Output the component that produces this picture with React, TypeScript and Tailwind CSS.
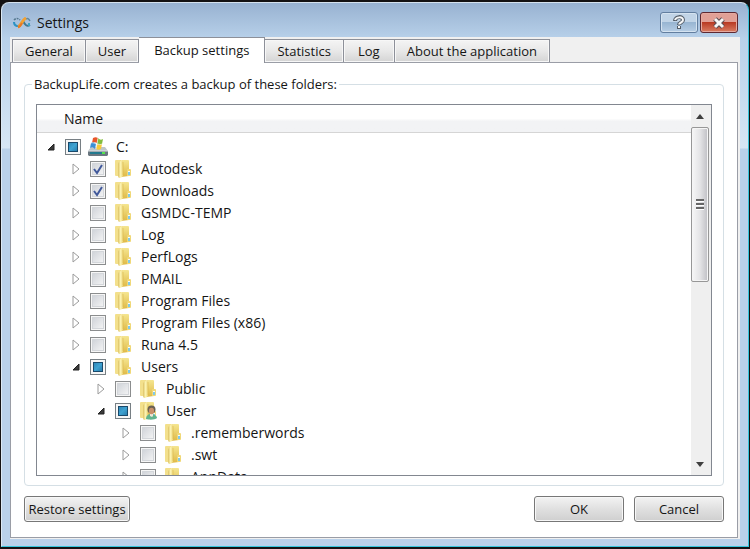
import { useState } from "react";

type CheckState = "on" | "off" | "mixed";

interface TreeNode {
  name: string;
  check: CheckState;
  icon?: "drive" | "user";
  open?: boolean;
  children?: TreeNode[];
}

const tree: TreeNode = {
  name: "C:",
  check: "mixed",
  icon: "drive",
  open: true,
  children: [
    { name: "Autodesk", check: "on" },
    { name: "Downloads", check: "on" },
    { name: "GSMDC-TEMP", check: "off" },
    { name: "Log", check: "off" },
    { name: "PerfLogs", check: "off" },
    { name: "PMAIL", check: "off" },
    { name: "Program Files", check: "off" },
    { name: "Program Files (x86)", check: "off" },
    { name: "Runa 4.5", check: "off" },
    {
      name: "Users",
      check: "mixed",
      open: true,
      children: [
        { name: "Public", check: "off" },
        {
          name: "User",
          check: "mixed",
          icon: "user",
          open: true,
          children: [
            { name: ".rememberwords", check: "off" },
            { name: ".swt", check: "off" },
            { name: "AppData", check: "off" },
          ],
        },
      ],
    },
  ],
};

const tabs = ["General", "User", "Backup settings", "Statistics", "Log", "About the application"];

function AppLogo() {
  return (
    <svg viewBox="0 0 18 12" className="h-3 w-[18px]" fill="none">
      <path d="M1 3C3 1 5 1 7 3" stroke="#56788f" strokeWidth="1.5" strokeDasharray="2 1" />
      <path d="M1 5c0 4 4 5 6 3" stroke="#2c93c4" strokeWidth="2" />
      <path d="M10 4c2 4 4 6 7 4" stroke="#41788f" strokeWidth="2" />
      <path d="M13 2c2-1 3 0 4 2" stroke="#63889c" strokeWidth="1.5" />
      <path d="M16 6v3" stroke="#3ba3c9" strokeWidth="2" />
      <path d="M5 10c3-1 4-7 8-9" stroke="#f2a234" strokeWidth="3" />
      <path d="M5 10c2 0 3-2 4-4" stroke="#e77a25" strokeWidth="2" />
    </svg>
  );
}

function FolderIcon({ user }: { user?: boolean }) {
  return (
    <svg viewBox="0 0 20 20" className="size-5">
      <defs>
        <linearGradient id="folderFront" x1="0" y1="0" x2="1" y2="0">
          <stop offset="0" stopColor="#dcc163" />
          <stop offset="0.5" stopColor="#fbf2b0" />
          <stop offset="1" stopColor="#efd97f" />
        </linearGradient>
        <linearGradient id="folderBack" x1="0" y1="0" x2="0" y2="1">
          <stop offset="0" stopColor="#f5e691" />
          <stop offset="1" stopColor="#dfb945" />
        </linearGradient>
      </defs>
      <path d="M9 2q0-1 1-1h5q1 0 1 1v8l1 1v5q0 1-1 1l-8 1z" fill="url(#folderBack)" />
      <path d="M2 2q0-1 1-1h5q1 0 1 1v15H3q-1 0-1-1z" fill="#f3e08c" />
      <path d="M5 5q0-1 1-2l4-2v15q0 1-1 2l-2 1q-2 0-2-2z" fill="url(#folderFront)" />
      <path d="M10 3v13" stroke="#d9b54a" strokeWidth="0.6" />
      <path d="M14 11q0-1 1-1h2q1 0 1 1v5q0 1-1 1h-3z" fill="#f0d878" />
      <path d="M16 12v4" stroke="#f8fbfc" strokeWidth="2" />
      <path d="M16 13v3" stroke="#4db5df" strokeWidth="1.4" />
      {user && (
        <g>
          <path d="M8 18c0-3 2-5 5-5s6 2 6 4c-2 2-8 2-11 1z" fill="#62b48e" />
          <path d="M12 12h3v3l-1 1-2-1z" fill="#f1e6d6" />
          <circle cx="13.5" cy="8.5" r="4" fill="#6b6253" />
          <ellipse cx="13.5" cy="10" rx="2.6" ry="3.2" fill="#c99069" />
        </g>
      )}
    </svg>
  );
}

function DriveIcon() {
  return (
    <svg viewBox="0 0 20 20" className="size-5">
      <path d="M3 10h14l3 4H0z" fill="#bfc5c9" />
      <path d="M0 14h20v4l-1 1H1l-1-1z" fill="#69767f" />
      <path d="M0 14h20" stroke="#dde2e5" />
      <path d="M2 15h13v2H2z" fill="#23798f" />
      <path d="M14 15h3v2h-3z" fill="#54e34d" />
      <path d="M5 1c2-1 3-1 5 0L9 6C7 5 6 5 4 6z" fill="#e8562a" />
      <path d="M10 1c2 2 3 2 5 1l-1 5c-2 1-3 1-5 0z" fill="#83bd3c" />
      <path d="M3 6c2-1 3-1 5 1l-1 5c-2-2-3-2-5-1z" fill="#3a8fd6" />
      <path d="M9 7c2 1 3 1 5 0l-1 5c-2 1-3 1-5 0z" fill="#f8ca39" />
      <path d="M10 1L8 12M3 6c2-1 4 1 6 1s3 1 5 0" stroke="#f5f5f5" strokeWidth="0.6" fill="none" />
    </svg>
  );
}

function TriCheckbox({ initial, label }: { initial: CheckState; label: string }) {
  const [state, setState] = useState<CheckState>(initial);

  return (
    <span className="grid size-4 shrink-0">
      <input
        type="checkbox"
        aria-label={label}
        checked={state === "on"}
        ref={(el) => {
          if (el) el.indeterminate = state === "mixed";
        }}
        onChange={() => setState(state === "on" ? "off" : "on")}
        className="col-start-1 row-start-1 size-4 appearance-none border border-[#8b8d8e] bg-linear-to-br from-[#cbcfd5] to-[#f8f8f8] shadow-[inset_0_0_0_1px_#f6f6f6,inset_0_0_0_2px_#d3d6da] indeterminate:border-[#777f84] indeterminate:from-[#2274a5] indeterminate:via-[#3fa3d2] indeterminate:to-[#1d6593] indeterminate:shadow-[inset_0_0_0_2px_#f6f6f6,inset_0_0_0_3px_#1a496b]"
      />
      {state === "on" && (
        <svg viewBox="0 0 16 16" className="pointer-events-none col-start-1 row-start-1 size-4">
          <path d="M4 8l3 4 5-8" fill="none" stroke="#41599b" strokeWidth="2" />
        </svg>
      )}
    </span>
  );
}

function TreeRow({ node }: { node: TreeNode }) {
  const [open, setOpen] = useState(Boolean(node.open));

  return (
    <li>
      <div className="flex h-[22px] items-center">
        <button
          type="button"
          aria-label={`Toggle ${node.name}`}
          aria-expanded={open}
          onClick={() => setOpen(!open)}
          className="flex h-4 w-5 items-center justify-center"
        >
          <svg viewBox="0 0 10 12" className="h-3 w-[10px]">
            {open ? (
              <path d="M8 3v6H2z" fill="#3b3b3b" stroke="#222" strokeLinejoin="round" />
            ) : (
              <path d="M2 1l6 5-6 5z" fill="#fff" stroke="#9b9b9b" />
            )}
          </svg>
        </button>
        <span className="ml-1 flex">
          <TriCheckbox initial={node.check} label={node.name} />
        </span>
        <span className="ml-[7px]">
          {node.icon === "drive" ? <DriveIcon /> : <FolderIcon user={node.icon === "user"} />}
        </span>
        <span className="ml-2 whitespace-nowrap">{node.name}</span>
      </div>
      {open && node.children && (
        <ul className="pl-[25px]">
          {node.children.map((child) => (
            <TreeRow key={child.name} node={child} />
          ))}
        </ul>
      )}
    </li>
  );
}

function ScrollBar() {
  return (
    <div className="flex w-5 shrink-0 flex-col bg-[#efefef] pr-[2px]">
      <button type="button" aria-label="Scroll up" className="flex h-[22px] items-center justify-center">
        <svg viewBox="0 0 8 5" className="h-[5px] w-2">
          <path d="M0 5l4-5 4 5z" fill="#3f3f3f" />
        </svg>
      </button>
      <div className="flex h-[155px] flex-col items-center justify-center gap-px rounded-xs border border-[#979797] bg-linear-to-r from-[#f7f7f7] via-[#e4e4e6] to-[#bfbfc4] shadow-[inset_0_0_0_1px_#f5f5f5]">
        <span className="h-[3px] w-2 border-b border-white bg-[#666]" />
        <span className="h-[3px] w-2 border-b border-white bg-[#666]" />
        <span className="h-[3px] w-2 border-b border-white bg-[#666]" />
      </div>
      <button type="button" aria-label="Scroll down" className="mt-auto flex h-[22px] items-center justify-center">
        <svg viewBox="0 0 8 5" className="h-[5px] w-2">
          <path d="M0 0l4 5 4-5z" fill="#3f3f3f" />
        </svg>
      </button>
    </div>
  );
}

function DialogButton({ children, className }: { children: string; className: string }) {
  return (
    <button
      type="button"
      className={`h-[26px] rounded-[3px] border border-[#777] bg-linear-to-b from-[#f3f3f3] via-[#e0e0e0] to-[#cfcfcf] whitespace-nowrap shadow-[inset_0_0_0_1px_#f7f7f7] ${className}`}
    >
      {children}
    </button>
  );
}

export default function App() {
  const [active, setActive] = useState("Backup settings");

  return (
    <div className="flex h-screen flex-col bg-[#141213] px-px py-[2px] font-['Open_Sans','Noto_Sans',sans-serif] text-[13px] leading-5 text-[#151515]">
      <div className="flex min-h-0 flex-1 flex-col rounded-t-lg border border-t-[#d5e2ee] border-r-[#35c5dc] border-b-[#35c5dc] border-l-[#dce9f4] bg-[linear-gradient(#98b2d1,#b8d1ea_36px,#d6e6f5_145px,#b9d1ea_146px)] px-2 pb-[7px]">
        <header className="flex h-[34px] shrink-0 items-start justify-between">
          <div className="flex items-center gap-[6px] pt-[10px] pl-[3px] text-sm leading-5">
            <AppLogo />
            <h1>Settings</h1>
          </div>
          <div className="flex gap-[2px] pt-[9px] pr-[2px]">
            <button
              type="button"
              aria-label="Help"
              className="flex h-[21px] w-[38px] items-center justify-center rounded-[3px] border border-[#627e9f] bg-linear-to-b from-[#c1d4e7] from-50% via-[#98b5d2] via-50% to-[#b7cee5] shadow-[inset_0_0_0_1px_#d5e3f0]"
            >
              <svg viewBox="0 0 14 16" className="h-4 w-[14px]" fill="none">
                <path d="M3 6c0-5 8-5 8-1 0 3-4 2-4 5M7 11v3" stroke="#535c67" strokeWidth="4" />
                <path d="M3 5c1-3 8-4 8 0 0 3-4 2-4 5M7 11v2" stroke="#f5f6f7" strokeWidth="2" />
                <path d="M6 10h2" stroke="#535c67" />
              </svg>
            </button>
            <button
              type="button"
              aria-label="Close"
              className="flex h-[21px] w-[38px] items-center justify-center rounded-[3px] border border-[#5e2831] bg-linear-to-b from-[#e1a096] from-50% via-[#b93a24] via-50% to-[#d97c62] shadow-[inset_0_0_0_1px_#e5a99f]"
            >
              <svg viewBox="0 0 14 12" className="h-3 w-[14px]" fill="none">
                <path d="M3 2l8 8M11 2l-8 8" stroke="#5c4b51" strokeWidth="5" />
                <path d="M3 2l8 8M11 2l-8 8" stroke="#f7f7f7" strokeWidth="3" />
              </svg>
            </button>
          </div>
        </header>

        <main className="flex min-h-0 flex-1 flex-col bg-[#f0f0f0] pr-[2px] pb-px">
          <div role="tablist" className="flex h-[25px] shrink-0 items-end pl-[2px]">
            {tabs.map((tab) => (
              <button
                key={tab}
                type="button"
                role="tab"
                aria-selected={active === tab}
                onClick={() => setActive(tab)}
                className={
                  active === tab
                    ? "relative -mb-px h-[26px] border-t border-r border-[#8d9099] bg-white px-[15px] pb-[2px] whitespace-nowrap"
                    : "h-[23px] min-w-[51px] border-t border-r border-[#8d9099] bg-linear-to-b from-[#f4f4f4] via-[#e8e8e8] to-[#d4d4d4] px-3 whitespace-nowrap shadow-[inset_0_0_0_1px_#f7f7f7] first:border-l"
                }
              >
                {tab}
              </button>
            ))}
          </div>

          <section className="flex min-h-0 flex-1 flex-col border border-[#9a9da6] bg-white px-[13px] pt-[11px] pb-[15px]">
            <fieldset className="flex min-h-0 flex-1 flex-col rounded-sm border border-[#d5dfe5] px-[11px] pb-[9px]">
              <legend className="-ml-1 px-[2px]">BackupLife.com creates a backup of these folders:</legend>
              <div className="mt-[10px] flex min-h-0 flex-1 border border-[#828790]">
                <div className="flex min-w-0 flex-1 flex-col overflow-hidden text-sm">
                  <div className="flex h-7 shrink-0 items-center border-b border-[#d5d5d5] bg-linear-to-b from-white from-50% to-[#f2f3f5] to-60% pl-[27px]">
                    Name
                  </div>
                  <ul className="min-h-0 flex-1 overflow-hidden pt-[3px] pl-1">
                    <TreeRow node={tree} />
                  </ul>
                </div>
                <ScrollBar />
              </div>
            </fieldset>
            <footer className="mt-[10px] flex shrink-0 items-center justify-between">
              <DialogButton className="w-[106px]">Restore settings</DialogButton>
              <div className="flex gap-[10px]">
                <DialogButton className="w-[90px]">OK</DialogButton>
                <DialogButton className="w-[90px]">Cancel</DialogButton>
              </div>
            </footer>
          </section>
        </main>
      </div>
    </div>
  );
}
